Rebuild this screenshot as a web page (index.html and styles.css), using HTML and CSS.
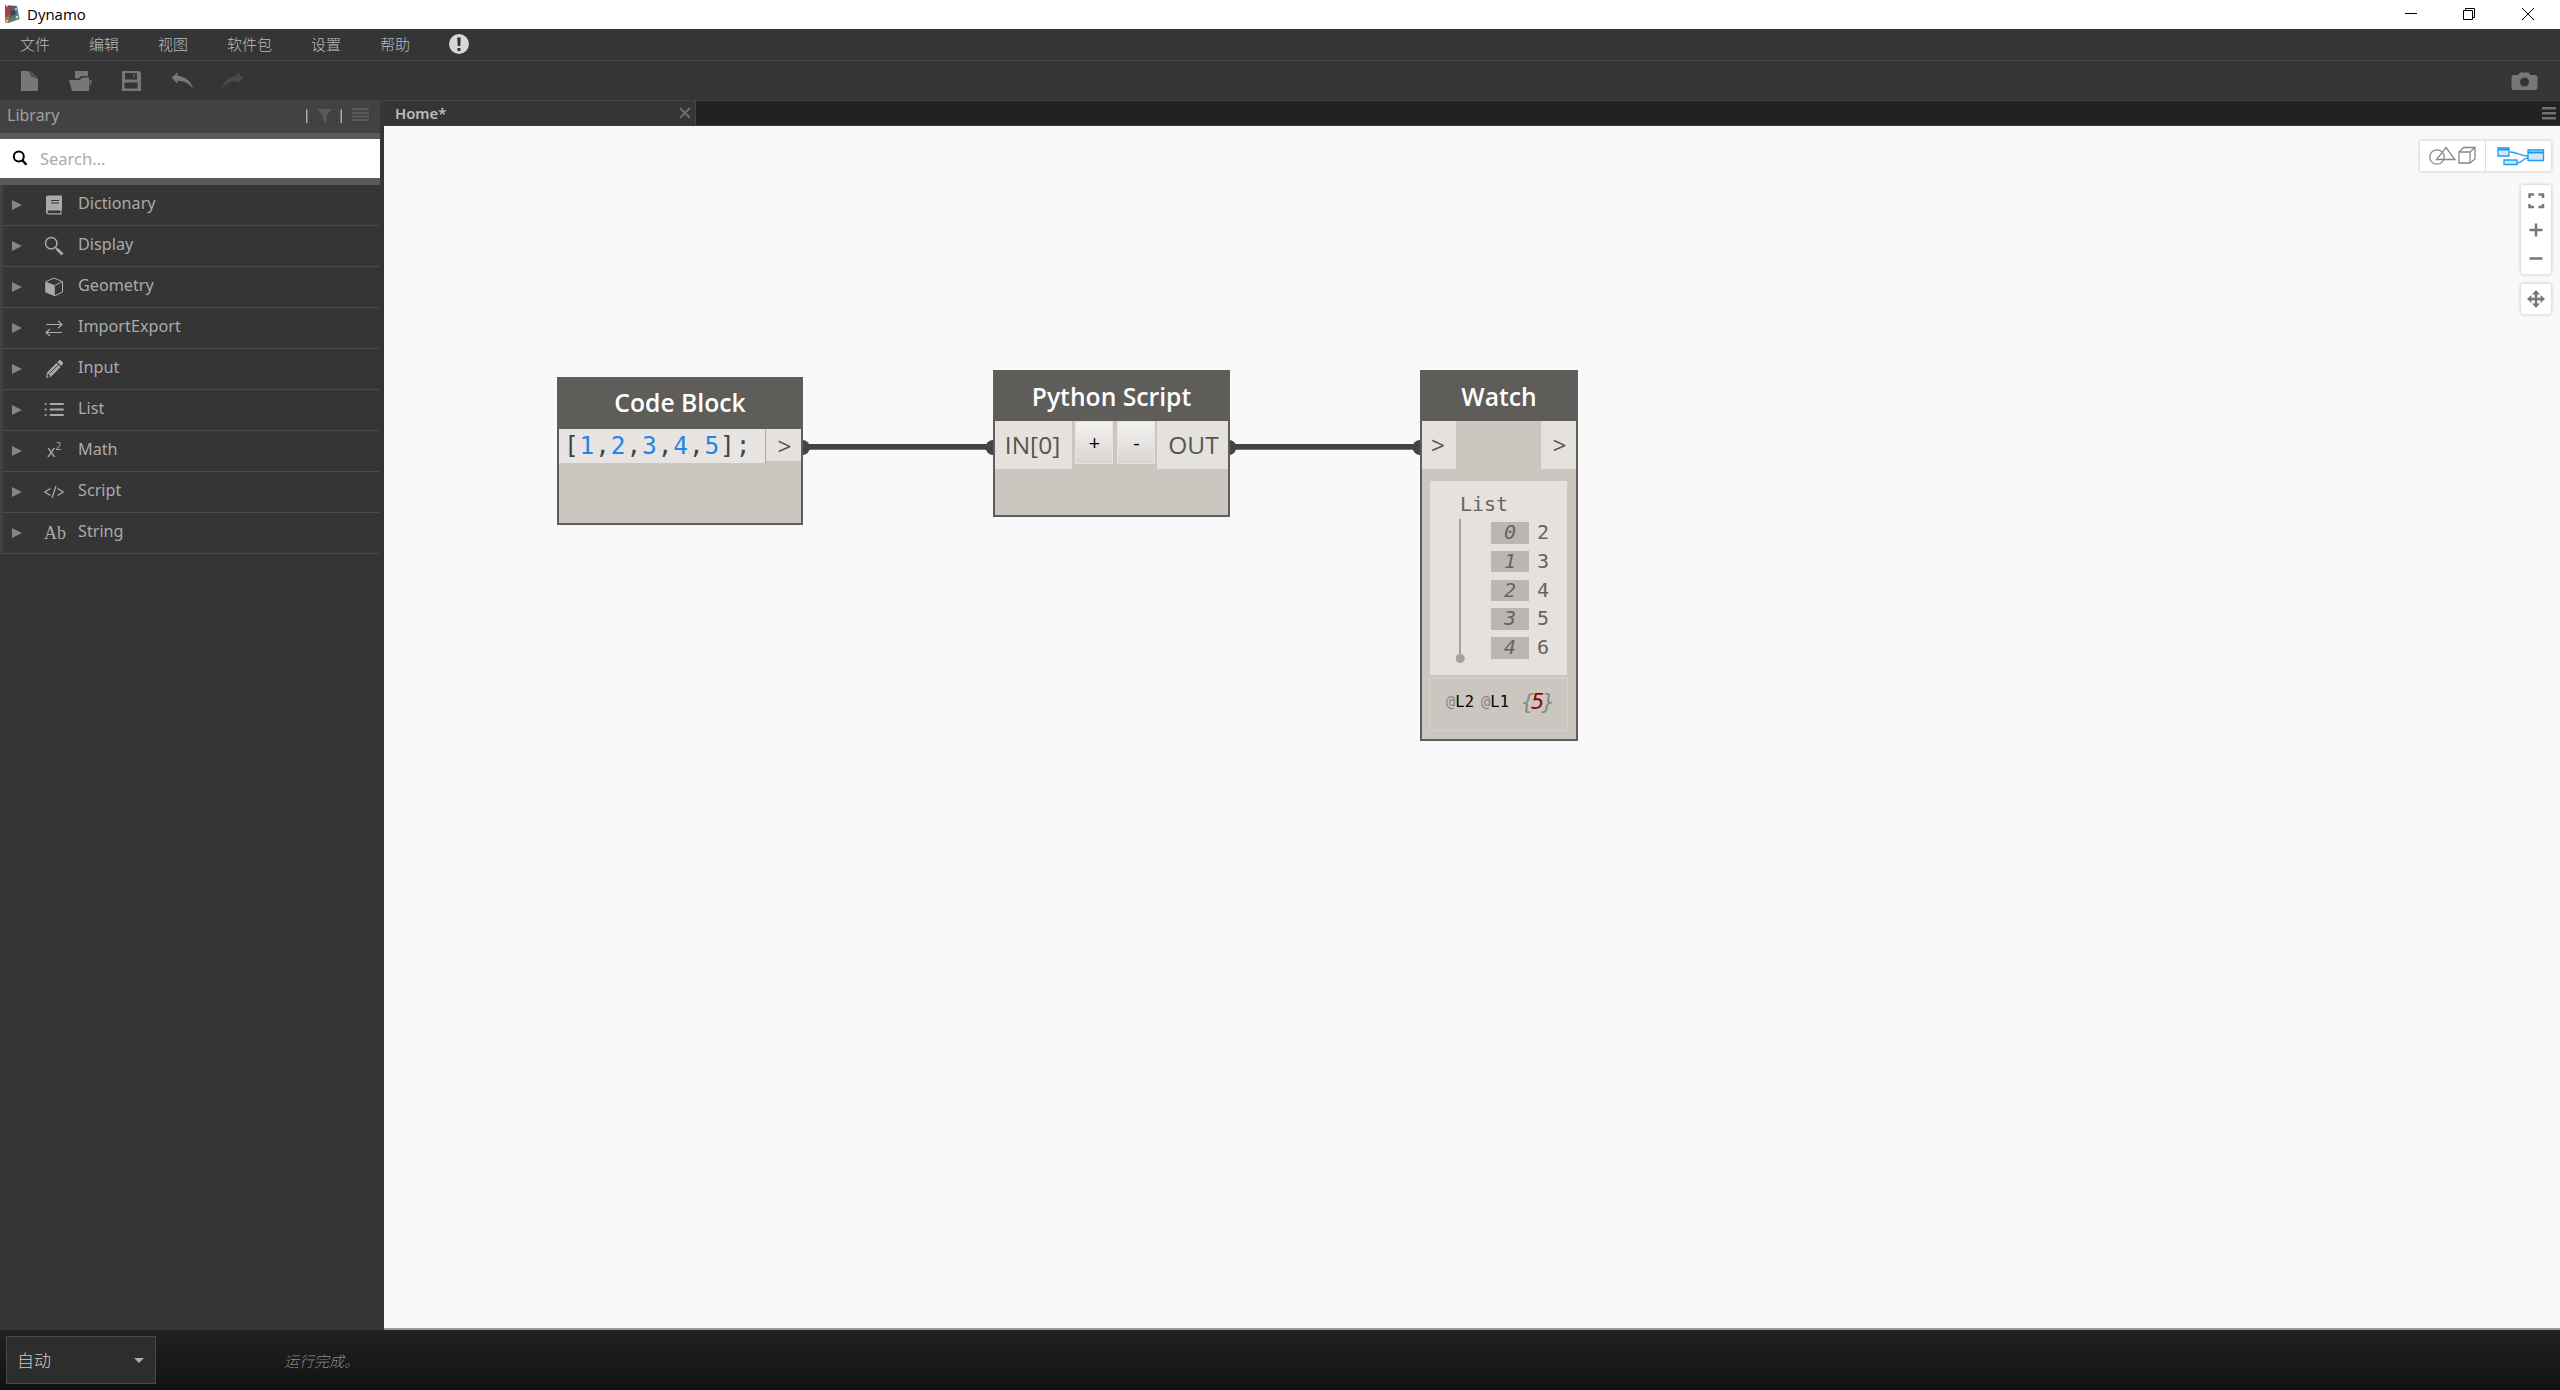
FILE: index.html
```html
<!DOCTYPE html>
<html lang="zh-CN">
<head>
<meta charset="utf-8">
<title>Dynamo</title>
<link rel="stylesheet" href="styles.css">
</head>
<body>
<div class="app">
  <header class="titlebar">
    <svg class="logo" width="16" height="20" viewBox="0 0 16 20">
      <defs>
        <linearGradient id="lg" x1="0" y1="0" x2="1" y2="0.3"><stop offset="0.1" stop-color="#c4373b"/><stop offset="0.5" stop-color="#6d5058"/><stop offset="1" stop-color="#3c8cab"/></linearGradient>
        <linearGradient id="lb" x1="0" y1="0" x2="0" y2="1"><stop offset="0.5" stop-color="#5d8a5a" stop-opacity="0"/><stop offset="1" stop-color="#6a8f63"/></linearGradient>
      </defs>
      <path d="M1 1 13 2 15.500 15 4 19 1 18Z" fill="url(#lg)"/>
      <path d="M1 1 13 2 15.500 15 4 19 1 18Z" fill="url(#lb)"/>
      <path d="M1 14 5 11 5 18 1 18Z" fill="#b06c68"/>
      <circle cx="9" cy="9" r="2.500" fill="#3b4352"/>
      <circle cx="3" cy="2" r="1" fill="#e8d8d8"/><circle cx="12" cy="5" r="1" fill="#bfe2ec"/><circle cx="13" cy="13" r="1.200" fill="#e6dfae"/><circle cx="3" cy="17" r="1" fill="#eadcdc"/>
    </svg>
    <span class="app-name">Dynamo</span>
    <svg class="win-controls" width="180" height="29" viewBox="0 0 180 29" fill="none" stroke="#000" stroke-width="1">
      <path d="M25 13.500h12M83.500 10.500h9v9h-9zM85.500 10.500v-2h9v9h-2M142 8l12 12M154 8l-12 12"/>
    </svg>
  </header>
  <nav class="menubar">
    <span>文件</span><span>编辑</span><span>视图</span><span>软件包</span><span>设置</span><span>帮助</span>
    <svg width="20" height="20" viewBox="0 0 20 20"><circle cx="10" cy="10" r="10" fill="#d6d6d6"/><path d="M8.200 3.500h3.600l-.5 8.500H8.700zM8.500 14h3v3h-3z" fill="#353535"/></svg>
  </nav>
  <div class="toolbar">
    <svg class="tools" width="250" height="39" viewBox="0 0 250 39" fill="#777">
      <path d="M21 10h9l8 7v13H21z"/><path d="M28.500 10l9 7.500c-1.500-1.500-4-2-6-2.200 0-2-1-4-3-5.300z" fill="#5c5c5c" stroke="#353535" stroke-width=".7"/>
      <path d="M75 10h13v5h-7l-2.500 2.500H75z"/><path d="M69 19h10.500l3-2.500H88.500l1 3-.500 10.500H72zM90 19.500h2l-2 6z"/>
      <path fill-rule="evenodd" d="M122 10h17l2 2v18h-19zM125 12v6.500h12V12zM124.500 21.500v6h13v-6z"/><path d="M133.500 12.500h1v4h-1z"/>
      <path d="M171.500 16.500l6-5v3.200c8 1 14 5.500 15.500 13-4-5.500-9-7.800-15.500-8v3z"/>
      <path fill="#484b49" d="M243.500 16.500l-6-5v3.200c-8 1-14 5.500-15.500 13 4-5.500 9-7.800 15.500-8v3z"/>
    </svg>
    <svg class="camera" width="27" height="18" viewBox="0 0 27 18"><path fill="#777" d="M2 3h5l2-2.500h8.500l2 2.500H25l1.500 1.500v12L25 18H2L.5 16.500v-12z"/><circle cx="13.500" cy="10" r="4.500" fill="#353535"/></svg>
  </div>
  <main class="body">
    <aside class="sidebar">
      <div class="lib-head"><span>Library</span>
        <svg width="70" height="20" viewBox="0 0 70 20"><path d="M3 3.500h1.500v13.500H3zM37.500 3.500H39v13.500h-1.500z" fill="#aaa"/><path d="M14 3h15l-5.500 6.500V17L20 14V9.500z" fill="#5a5a5a"/><path d="M49 2h17v2H49zM49 6h17v2H49zM49 9.500h17v2H49zM49 13h17v2H49z" fill="#5a5a5a"/></svg>
      </div>
      <div class="search">
        <svg width="16" height="16" viewBox="0 0 16 16" fill="none" stroke="#000" stroke-width="2"><circle cx="6.800" cy="6.500" r="5"/><path d="M10.500 10.500l4 4.300" stroke-width="2.400"/></svg>
        <span>Search...</span>
      </div>
      <ul class="library">
        <li><i></i><svg viewBox="0 0 20 20"><path fill-rule="evenodd" d="M4 .5h14v15l-.7.800v2.200h.7v1H4.500C3 19.500 2 18.500 2 17V2.500C2 1.300 2.800.5 4 .5zM4.500 15.500c-1.300 0-1.300 2.700 0 2.700h11.800v-2.700zM7 5v1h8V5zM7 7.600v1h8v-1z"/></svg><span>Dictionary</span></li>
        <li><i></i><svg viewBox="0 0 20 20"><g fill="none" stroke="#aaa"><circle cx="7.200" cy="7.200" r="5.700" stroke-width="1.500"/><path d="M11.500 11.500l2 2" stroke-width="1.500"/><path d="M13 13l5.500 5.500" stroke-width="2.600"/></g></svg><span>Display</span></li>
        <li><i></i><svg viewBox="0 0 20 20"><path d="M1.200 5.200l9 3.300V19l-9-3.800z"/><path fill="none" stroke="#aaa" d="M1.500 4.800L10 1l8.500 3.700v10.500L10.300 19V8.600l8.200-3.900M1.500 4.800L10 8.500"/></svg><span>Geometry</span></li>
        <li><i></i><svg viewBox="0 0 20 20"><path fill="none" stroke="#aaa" stroke-width="1.200" d="M2 6.500h15.500M14 3l4 3.500-4 3.500M18 14.500H2.500M6 11l-4 3.500L6 18"/></svg><span>ImportExport</span></li>
        <li><i></i><svg viewBox="0 0 20 20"><path fill-rule="evenodd" d="M2 19l1-5.500L12.500 4l4 4L7 17.800zM13.300 3.200L15.500 1l.8-.2L19 3.500v1.200l-1.800 2.400zM4 14.500l-.7 2.800 1 .6 2.400-.6z"/><path d="M5.500 14.500l8.500-8.300" stroke="#353535"/></svg><span>Input</span></li>
        <li><i></i><svg viewBox="0 0 20 20"><path fill="none" stroke="#aaa" stroke-width="2" stroke-linecap="round" d="M6.500 4h12.500M6.500 9.500h12.500M6.500 15h12.500M1.600 4h.1M1.600 9.500h.1M1.600 15h.1"/></svg><span>List</span></li>
        <li><i></i><b class="math">x<sup>2</sup></b><span>Math</span></li>
        <li><i></i><svg viewBox="0 0 20 20"><path fill="none" stroke="#aaa" stroke-width="1.200" d="M6.500 6.500L.8 10l5.700 3.500M13.500 6.500l5.700 3.500-5.700 3.500M12 4L8 16"/></svg><span>Script</span></li>
        <li><i></i><b class="ab">Ab</b><span>String</span></li>
      </ul>
    </aside>
    <section class="workspace">
      <div class="tabs">
        <div class="tab"><span>Home*</span><svg width="12" height="12" viewBox="0 0 12 12"><path d="M1 1l10 10M11 1L1 11" stroke="#6c6c6c" stroke-width="2"/></svg></div>
        <svg class="tab-menu" width="14" height="13" viewBox="0 0 14 13"><path d="M0 0h14v2.500H0zM0 5h14v2.500H0zM0 10h14v2.500H0z" fill="#707070"/></svg>
      </div>
      <div class="canvas">
        <svg class="wires" width="1100" height="400" viewBox="0 0 1100 400" fill="#444">
          <path d="M419 318h192v5H419zM846 318h192v5H846z"/><path d="M419 323h192v1H419zM846 323h192v1H846z" fill="#777"/>
          <circle cx="418.500" cy="321.500" r="7.500"/><circle cx="609" cy="321.500" r="7.500"/><circle cx="845" cy="321.500" r="7.500"/><circle cx="1036" cy="321.500" r="7.500"/>
        </svg>
        <article class="node code-node">
          <h2>Code Block</h2>
          <div class="ports"><div class="code">[<em>1</em>,<em>2</em>,<em>3</em>,<em>4</em>,<em>5</em>];</div><div class="port out">&gt;</div></div>
        </article>
        <article class="node python-node">
          <h2>Python Script</h2>
          <div class="ports"><div class="port in0">IN[0]</div><div class="btn">+</div><div class="btn">-</div><div class="port outp">OUT</div></div>
        </article>
        <article class="node watch-node">
          <h2>Watch</h2>
          <div class="ports"><div class="port">&gt;</div><div class="port">&gt;</div></div>
          <div class="result">
            <div class="list-name">List</div>
            <div class="tree">
              <svg width="10" height="146" viewBox="0 0 10 146"><path d="M4 0h2v136H4z" fill="#a5a39e"/><circle cx="5.200" cy="139.500" r="4.500" fill="#a5a39e"/></svg>
              <ol><li><i>0</i>2</li><li><i>1</i>3</li><li><i>2</i>4</li><li><i>3</i>5</li><li><i>4</i>6</li></ol>
            </div>
          </div>
          <div class="levels"><span><u>@</u>L2</span><span><u>@</u>L1</span><span class="count"><u>{</u>5<u>}</u></span></div>
        </article>
        <div class="view-tools">
          <svg class="modes" width="131" height="30" viewBox="0 0 131 30">
            <path d="M65 0h1v30h-1z" fill="#ddd"/>
            <g fill="none" stroke="#888" stroke-width="1.300"><circle cx="17" cy="16" r="7.200"/><path d="M26 6.500l9 12H16.500zM39 11h11v11H39zM39 11l4.500-4.500H55V18l-5 4M50 11l5-4.500"/></g>
            <g fill="#cce8fb" stroke="#1a9cf5" stroke-width="1.300"><path fill="none" d="M90 11c8 0 9 4 18 4M97 22c6 0 5-5 11-5"/><path d="M78 7h11v8H78zM84 19h13v4.500H84zM108 9h15.500v10.500H108z"/><path d="M78 8.500h11M108 11.500h15.500" stroke-width="1.800"/></g>
          </svg>
          <svg class="zooms" width="30" height="89" viewBox="0 0 30 89" fill="none" stroke="#777" stroke-width="2.500"><path d="M8.500 13V9.500H13M17.500 9.500H22V13M22 19v3h-4.500M13 22H8.500v-3M15 38.500v13M8.500 45h13M8.500 73.500h13"/></svg>
          <svg class="pan" width="30" height="30" viewBox="0 0 30 30"><path d="M15 9v12M9 15h12" stroke="#777" stroke-width="2.500"/><path fill="#777" d="M15 6l4 4.500h-8zM15 24l4-4.500h-8zM6 15l4.500-4v8zM24 15l-4.500-4v8z"/></svg>
        </div>
      </div>
    </section>
  </main>
  <footer class="status">
    <div class="run-mode"><span>自动</span><svg width="10" height="5" viewBox="0 0 10 5"><path d="M0 0h10L5 5z" fill="#aaa"/></svg></div>
    <span class="message">运行完成。</span>
  </footer>
</div>
</body>
</html>
```
FILE: styles.css
```css
* { box-sizing: border-box; }
body { margin: 0; font-family: "Noto Sans", "Noto Sans CJK SC", sans-serif; }
svg { display: block; flex: none; }
.app { width: 2560px; height: 1390px; display: flex; flex-direction: column; background: #353535; overflow: hidden; }

.titlebar { height: 29px; display: flex; align-items: center; background: #fff; padding-left: 4px; flex: none; }
.logo { margin-bottom: 1px; }
.app-name { margin-left: 7px; padding-bottom: 1px; font: 15px/20px "Open Sans", sans-serif; color: #000; }
.win-controls { margin-left: auto; }

.menubar { height: 32px; flex: none; display: flex; align-items: center; gap: 39px; padding: 0 0 2px 20px; border-bottom: 1px solid #424242; font: 300 15px/20px "Noto Sans CJK SC", sans-serif; color: #bcbcbc; }
.toolbar { height: 40px; flex: none; display: flex; justify-content: space-between; align-items: flex-start; padding-right: 22px; border-bottom: 1px solid #424242; }
.camera { margin-top: 11px; }

.body { height: 1229px; display: flex; flex: none; }
.sidebar { width: 384px; padding-right: 4px; background: #353535; flex: none; }
.lib-head { height: 32px; display: flex; align-items: center; justify-content: space-between; padding: 0 7px 4px; background: #424242; font-size: 16px; line-height: 24px; color: #a0a0a0; }
.lib-head svg { margin-top: 2px; }
.search { height: 52px; display: flex; align-items: center; gap: 12px; padding: 0 0 1px 12px; background: #fff; border-top: 6px solid #5a5a5a; border-bottom: 7px solid #5a5a5a; font-size: 16.500px; color: #aaa; }
.library { list-style: none; margin: 0; padding: 0; border-left: 3px solid #424242; }
.library li { height: 41px; display: flex; align-items: center; border-bottom: 1px solid #4a4a4a; padding-left: 9px; color: #aaa; font-size: 16.200px; }
.library li > i { border-left: 10px solid #858585; border-top: 5px solid transparent; border-bottom: 5px solid transparent; margin-right: 22px; }
.library svg { width: 20px; height: 20px; fill: #aaa; }
.library li > span { margin-left: 14px; line-height: 24px; padding-bottom: 4px; }
.library b { width: 20px; font-weight: 400; line-height: 20px; white-space: nowrap; }
.math { font-size: 16px; padding-left: 3px; }
.math sup { font-size: 10px; line-height: 0; vertical-align: 7px; }
.library .ab { font: 18px/20px "Liberation Serif", serif; }

.workspace { flex: 1; display: flex; flex-direction: column; min-width: 0; }
.tabs { height: 25px; flex: none; display: flex; justify-content: space-between; background: #222; border-bottom: 1px solid #3c3c3c; padding-right: 4px; }
.tab { width: 312px; display: flex; align-items: center; justify-content: space-between; background: #353535; border-right: 1px solid #444; padding: 0 4px 1px 11px; font-size: 14.800px; font-weight: 600; line-height: 22px; color: #bdbdbd; }
.tab-menu { margin-top: 6px; }
.canvas { position: relative; flex: 1; background: #f9f9f9; border-bottom: 2px solid #999; }
.wires { position: absolute; left: 0; top: 0; }

.node { position: absolute; border: 2px solid #5f5e5b; background: #cbc6bf; font-family: "Open Sans", sans-serif; color: #555; }
.node h2 { margin: 0; height: 49px; background: #5e5d5a; color: #fff; font-size: 24.700px; font-weight: 600; line-height: 49px; text-align: center; }
.code-node { left: 173px; top: 251px; width: 246px; height: 148px; }
.code-node h2 { height: 50px; line-height: 48px; }
.python-node { left: 609px; top: 244px; width: 237px; height: 147px; }
.watch-node { left: 1036px; top: 244px; width: 158px; height: 371px; }
.ports { display: flex; align-items: flex-start; }
.port { height: 48px; background: #e5e2dd; text-align: center; font-size: 24.500px; line-height: 48px; }
.code { width: 207px; height: 34px; border-right: 1px solid #aaa; background: #e7e4e1; font: 24.500px/34px "DejaVu Sans Mono", monospace; letter-spacing: .85px; color: #444; padding-left: 5px; white-space: nowrap; }
.code em { font-style: normal; color: #2385e8; }
.port.out { width: 35px; height: 32px; line-height: 33px; padding-left: 2px; }
.in0 { width: 77px; margin-right: 3px; padding-right: 2px; }
.btn { width: 38px; height: 43px; margin-right: 4px; padding-left: 1px; border: 1px solid #e6e3df; background: linear-gradient(#f3f2f1, #d9d6d1); color: #000; font-size: 20px; line-height: 42px; text-align: center; }
.btn + .btn { margin-right: 2px; }
.outp { width: 71px; padding-left: 2px; }
.watch-node .ports { justify-content: space-between; }
.watch-node .port { width: 34px; padding-right: 2px; }
.watch-node .port + .port { width: 35px; padding: 0 0 0 2px; }
.result { margin: 12px 9px 0 8px; height: 194px; background: #e5e2dd; padding: 10px 0 0 25px; font: 20px/26px "DejaVu Sans Mono", monospace; color: #666460; }
.list-name { padding-left: 5px; }
.tree { display: flex; gap: 26px; padding-top: 2px; }
.tree ol { list-style: none; margin: 3px 0 0; padding: 0; }
.tree li { display: flex; height: 28.800px; line-height: 21px; gap: 8px; }
.tree i { width: 38px; height: 21.500px; background: #bab7b2; text-align: center; }
.levels { margin: 2px 8px 0 7px; height: 54px; border: 1px solid #d2d2d2; display: flex; align-items: center; gap: 7px; padding: 0 0 4px 16px; font: 15.500px/20px "DejaVu Sans Mono", monospace; color: #000; white-space: nowrap; }
.levels u { text-decoration: none; color: #888; }
.count { font-size: 22px; font-style: italic; color: #900009; letter-spacing: -3px; margin-left: 5px; }

.view-tools { position: absolute; right: 9px; top: 15px; display: flex; flex-direction: column; align-items: flex-end; }
.view-tools svg { background: #fff; border-radius: 2px; box-shadow: 0 0 3px 1px #d5d5d5; }
.zooms { margin-top: 14px; }
.pan { margin-top: 10px; }

.status { height: 60px; flex: none; display: flex; align-items: center; padding-left: 6px; background: linear-gradient(#222, #111); font-family: "Noto Sans CJK SC", sans-serif; }
.run-mode { width: 150px; height: 48px; display: flex; align-items: center; justify-content: space-between; border: 1px solid #484848; background: #2d2d2d; padding: 0 11px 0 10px; font-size: 17px; font-weight: 300; color: #ccc; }
.run-mode span { padding-bottom: 2px; }
.message { margin-left: 128px; font-size: 15px; font-weight: 300; font-style: italic; color: #8a8a8a; }
```
